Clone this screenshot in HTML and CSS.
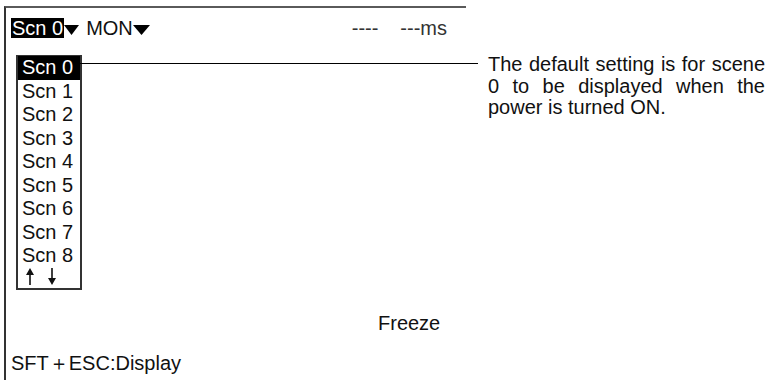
FILE: index.html
```html
<!DOCTYPE html>
<html lang="en">
<head>
  <meta charset="UTF-8">
  <meta name="viewport" content="width=device-width, initial-scale=1.0">
  <title>Scene Selection</title>
  <link rel="stylesheet" href="styles.css">
</head>
<body>

<div class="page">
  <div class="screen">
    <div class="status">
      <span class="sel">Scn 0</span>
      <svg class="tri" width="15" height="10" viewBox="0 0 15 10"><polygon points="0,0 15,0 7.5,10"/></svg>
      <span class="mode">MON</span>
      <svg class="tri" width="17" height="10" viewBox="0 0 17 10"><polygon points="0,0 17,0 8.5,10"/></svg>
      <span class="spacer"></span>
      <span class="count">----</span>
      <span class="time">---ms</span>
    </div>

    <ul class="scenes">
      <li class="active">Scn 0</li>
      <li>Scn 1</li>
      <li>Scn 2</li>
      <li>Scn 3</li>
      <li>Scn 4</li>
      <li>Scn 5</li>
      <li>Scn 6</li>
      <li>Scn 7</li>
      <li>Scn 8</li>
      <li class="arrows">
        <svg width="8" height="17" viewBox="0 0 8 17"><polygon points="4,0 8,7 4.8,7 4.8,17 3.2,17 3.2,7 0,7"/></svg>
        <svg width="8" height="17" viewBox="0 0 8 17"><polygon points="3.2,0 4.8,0 4.8,10 8,10 4,17 0,10 3.2,10"/></svg>
      </li>
    </ul>

    <div class="freeze">Freeze</div>
    <div class="hint">SFT＋ESC:Display</div>
  </div>

  <p class="note">The default setting is for scene 0 to be displayed when the power is turned ON.</p>
</div>

</body>
</html>
```

FILE: styles.css
```css
body {
  margin: 0;
  background-color: #fff;
  color: #111;
  font-family: 'Liberation Sans', Arial, sans-serif;
  font-size: 20px;
  overflow: hidden;
}

.page {
  display: flex;
  align-items: flex-start;
  height: 380px;
}

.screen {
  box-sizing: border-box;
  width: 462px;
  height: 374px;
  margin: 6px 0 0 4px;
  padding: 10px 19px 0 5px;
  border-top: 2px solid #5a5a5a;
  border-left: 2px solid #333;
}

/* top status line */
.status {
  display: flex;
  align-items: center;
  height: 20px;
  line-height: 20px;
}

.sel {
  background-color: #000;
  color: #fff;
  padding: 0 1px;
}

.tri {
  fill: #000;
  margin-top: 4px;
}

.mode {
  margin-left: 7px;
}

.spacer {
  flex: 1;
}

.count {
  color: #333;
}

.time {
  margin-left: 22px;
  color: #333;
}

/* scene drop-down list */
.scenes {
  list-style: none;
  width: 66px;
  box-sizing: border-box;
  margin: 17px 0 0 5px;
  padding: 0 0 2px;
  border: 2px solid #333;
  border-top: 1px solid #333;
  line-height: 23.5px;
}

.scenes li {
  padding-left: 4px;
}

.scenes .active {
  position: relative;
  background-color: #000;
  color: #fff;
}

/* leader line to the note */
.scenes .active::after {
  content: '';
  position: absolute;
  left: 100%;
  top: 7px;
  width: 398px;
  height: 1px;
  background-color: #000;
}

.scenes .arrows {
  display: flex;
  gap: 14px;
  height: 18px;
  padding-left: 8px;
}

.scenes .arrows svg {
  fill: #111;
}

.freeze {
  margin: 21px 0 0 367px;
  line-height: 24px;
}

.hint {
  margin-top: 16px;
  line-height: 24px;
}

.note {
  width: 277px;
  margin: 54px 0 0 22px;
  line-height: 21.7px;
  text-align: justify;
}
```
